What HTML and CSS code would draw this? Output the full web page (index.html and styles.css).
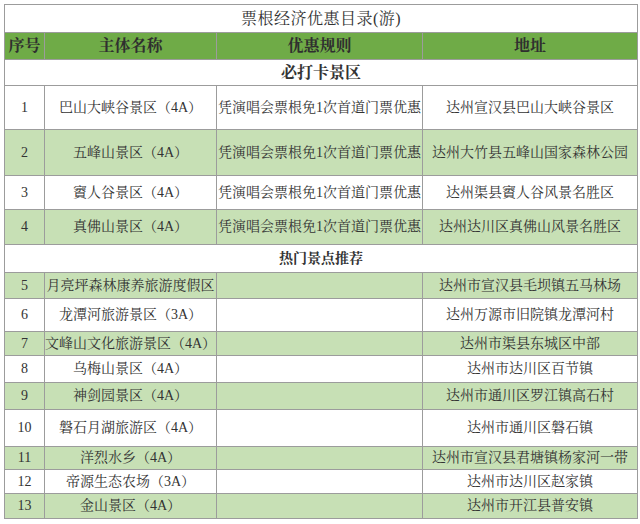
FILE: index.html
```html
<!DOCTYPE html>
<html lang="zh-CN">
<head>
<meta charset="utf-8">
<title>票根经济优惠目录(游)</title>
<link rel="stylesheet" href="styles.css">
</head>
<body>
<table class="sheet">
  <colgroup>
    <col class="c-no"><col class="c-name"><col class="c-rule"><col class="c-addr">
  </colgroup>
  <tr class="h28"><td colspan="4" class="title">票根经济优惠目录(游)</td></tr>
  <tr class="h27 head"><td>序号</td><td>主体名称</td><td>优惠规则</td><td>地址</td></tr>
  <tr class="h26"><td colspan="4" class="section">必打卡景区</td></tr>
  <tr class="h44"><td>1</td><td>巴山大峡谷景区（4A）</td><td>凭演唱会票根免1次首道门票优惠</td><td>达州宣汉县巴山大峡谷景区</td></tr>
  <tr class="h46 alt"><td>2</td><td>五峰山景区（4A）</td><td>凭演唱会票根免1次首道门票优惠</td><td>达州大竹县五峰山国家森林公园</td></tr>
  <tr class="h34"><td>3</td><td>賨人谷景区（4A）</td><td>凭演唱会票根免1次首道门票优惠</td><td>达州渠县賨人谷风景名胜区</td></tr>
  <tr class="h35 alt"><td>4</td><td>真佛山景区（4A）</td><td>凭演唱会票根免1次首道门票优惠</td><td>达州达川区真佛山风景名胜区</td></tr>
  <tr class="h28"><td colspan="4" class="section sm">热门景点推荐</td></tr>
  <tr class="h26 alt"><td>5</td><td>月亮坪森林康养旅游度假区</td><td></td><td>达州市宣汉县毛坝镇五马林场</td></tr>
  <tr class="h33"><td>6</td><td>龙潭河旅游景区（3A）</td><td></td><td>达州万源市旧院镇龙潭河村</td></tr>
  <tr class="h24 alt"><td>7</td><td>文峰山文化旅游景区（4A）</td><td></td><td>达州市渠县东城区中部</td></tr>
  <tr class="h27"><td>8</td><td>乌梅山景区（4A）</td><td></td><td>达州市达川区百节镇</td></tr>
  <tr class="h27 alt"><td>9</td><td>神剑园景区（4A）</td><td></td><td>达州市通川区罗江镇高石村</td></tr>
  <tr class="h37"><td>10</td><td>磐石月湖旅游区（4A）</td><td></td><td>达州市通川区磐石镇</td></tr>
  <tr class="h23 alt"><td>11</td><td>洋烈水乡（4A）</td><td></td><td>达州市宣汉县君塘镇杨家河一带</td></tr>
  <tr class="h24"><td>12</td><td>帝源生态农场（3A）</td><td></td><td>达州市达川区赵家镇</td></tr>
  <tr class="h25 alt"><td>13</td><td>金山景区（4A）</td><td></td><td>达州市开江县普安镇</td></tr>
</table>
</body>
</html>
```

FILE: styles.css
```css
html, body {
  margin: 0;
  padding: 0;
  background: #ffffff;
}
body {
  padding: 4px 0 0 4px;
  font-family: "Liberation Serif", "Noto Serif CJK SC", "Noto Sans CJK SC", serif;
  color: #333333;
}
.sheet {
  border-collapse: collapse;
  table-layout: fixed;
  width: 633px;
  font-size: 14px;
}
.c-no { width: 40px; }
.c-name { width: 172px; }
.c-rule { width: 206px; }
.c-addr { width: 215px; }
.sheet td {
  border: 1px solid #9c9c9c;
  padding: 0;
  text-align: center;
  vertical-align: middle;
  white-space: nowrap;
  overflow: visible;
  line-height: 1;
}
.title {
  font-size: 16px;
  letter-spacing: 0.5px;
}
.head td {
  background: #6fab47;
  font-size: 16px;
  font-weight: bold;
  color: #2f2f2f;
}
.section {
  font-size: 16px;
  font-weight: bold;
}
.section.sm {
  font-size: 14px;
}
.alt td {
  background: #c7e0b5;
}
.h23 { height: 23px; }
.h24 { height: 24px; }
.h25 { height: 25px; }
.h26 { height: 26px; }
.h27 { height: 27px; }
.h28 { height: 28px; }
.h33 { height: 33px; }
.h34 { height: 34px; }
.h35 { height: 35px; }
.h37 { height: 37px; }
.h44 { height: 44px; }
.h46 { height: 46px; }
```
